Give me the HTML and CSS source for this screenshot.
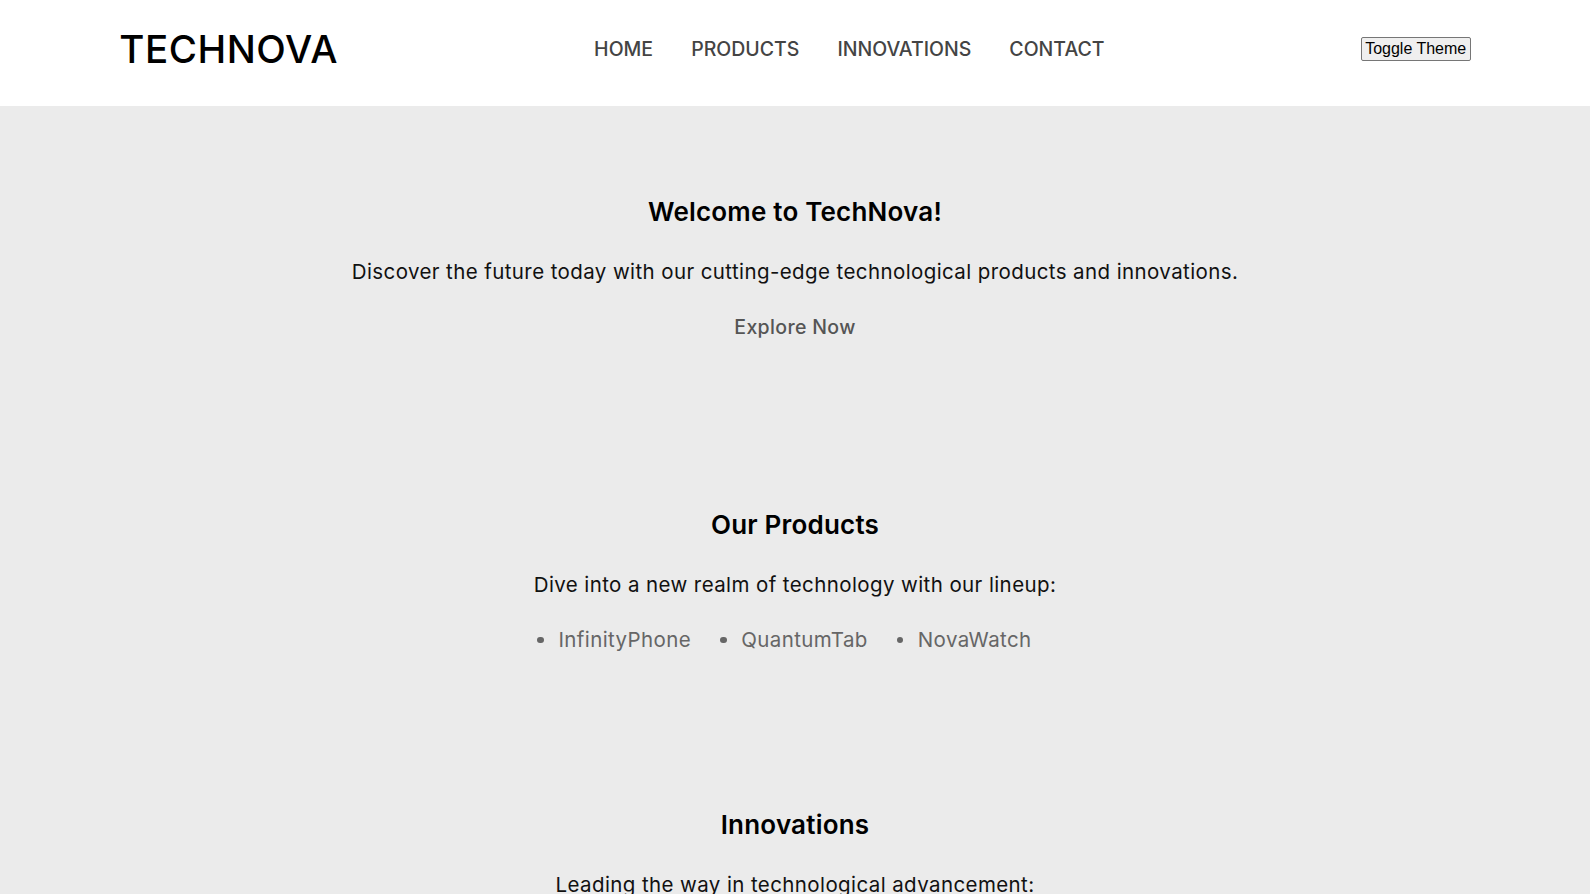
FILE: index.html
```html
<!DOCTYPE html>
<html lang="en">
<head>
<meta charset="utf-8">
<title>TechNova</title>
<link rel="stylesheet" href="styles.css">
</head>
<body>
<header class="site-header">
  <div class="header-inner">
    <div class="logo">TECHNOVA</div>
    <nav class="main-nav">
      <ul class="nav-list">
        <li><a href="#" class="nav-link">HOME</a></li>
        <li><a href="#" class="nav-link">PRODUCTS</a></li>
        <li><a href="#" class="nav-link">INNOVATIONS</a></li>
        <li><a href="#" class="nav-link">CONTACT</a></li>
      </ul>
    </nav>
    <button class="theme-toggle" type="button">Toggle Theme</button>
  </div>
</header>
<main class="content">
  <section class="section hero">
    <h2 class="section-title">Welcome to TechNova!</h2>
    <p class="section-text">Discover the future today with our cutting-edge technological products and innovations.</p>
    <a href="#" class="explore-link">Explore Now</a>
  </section>
  <section class="section products">
    <h2 class="section-title">Our Products</h2>
    <p class="section-text">Dive into a new realm of technology with our lineup:</p>
    <ul class="product-list">
      <li class="product-item">InfinityPhone</li>
      <li class="product-item">QuantumTab</li>
      <li class="product-item">NovaWatch</li>
    </ul>
  </section>
  <section class="section innovations">
    <h2 class="section-title">Innovations</h2>
    <p class="section-text">Leading the way in technological advancement:</p>
  </section>
</main>
</body>
</html>
```
FILE: styles.css
```css
* { box-sizing: border-box; }

body {
  margin: 0;
  background: #ebebeb;
  font-family: Inter, "Noto Sans", sans-serif;
  color: #000;
}

.site-header {
  background: #ffffff;
  height: 106px;
  padding-bottom: 8px;
}

.header-inner {
  width: 85%;
  height: 100%;
  margin: 0 auto;
  display: flex;
  align-items: center;
  justify-content: space-between;
}

.logo {
  font-size: 38.5px;
  font-weight: 500;
  line-height: 46px;
  letter-spacing: 0.55px;
  color: #000;
}

.nav-list {
  display: flex;
  gap: 38px;
  list-style: none;
  margin: 0;
  padding: 0;
}

.nav-link {
  font-size: 19.5px;
  font-weight: 500;
  line-height: 30px;
  color: #444;
  text-decoration: none;
}

.theme-toggle {
  font-family: "Liberation Sans", Arial, sans-serif;
  font-size: 16px;
  line-height: 20px;
  padding: 1px 3.5px;
  border: 1px solid #767676;
  border-radius: 2px;
  background: #efefef;
  color: #000;
}

.section {
  text-align: center;
  padding: 75px 0;
}

.hero {
  padding: 86px 0 88px;
}

.section-title {
  margin: 0 0 25px;
  font-size: 26px;
  font-weight: 600;
  line-height: 40px;
  letter-spacing: 0.2px;
}

.section-text {
  margin: 0 0 25px;
  font-size: 20.5px;
  line-height: 30px;
  letter-spacing: 0.4px;
  color: #111;
}

.section-text:last-child { margin-bottom: 0; }

.explore-link {
  display: block;
  font-size: 19.5px;
  font-weight: 500;
  line-height: 30px;
  letter-spacing: 0.35px;
  color: #555;
  text-decoration: none;
}

.product-list {
  display: flex;
  justify-content: center;
  gap: 50px;
  list-style: none;
  margin: 0;
  padding: 0;
}

.product-item {
  position: relative;
  font-size: 20.5px;
  line-height: 30px;
  letter-spacing: 0.4px;
  color: #666;
}

.product-item::before {
  content: "";
  position: absolute;
  left: -21px;
  top: 11.5px;
  width: 6.5px;
  height: 6.5px;
  border-radius: 50%;
  background: #666;
}
```
